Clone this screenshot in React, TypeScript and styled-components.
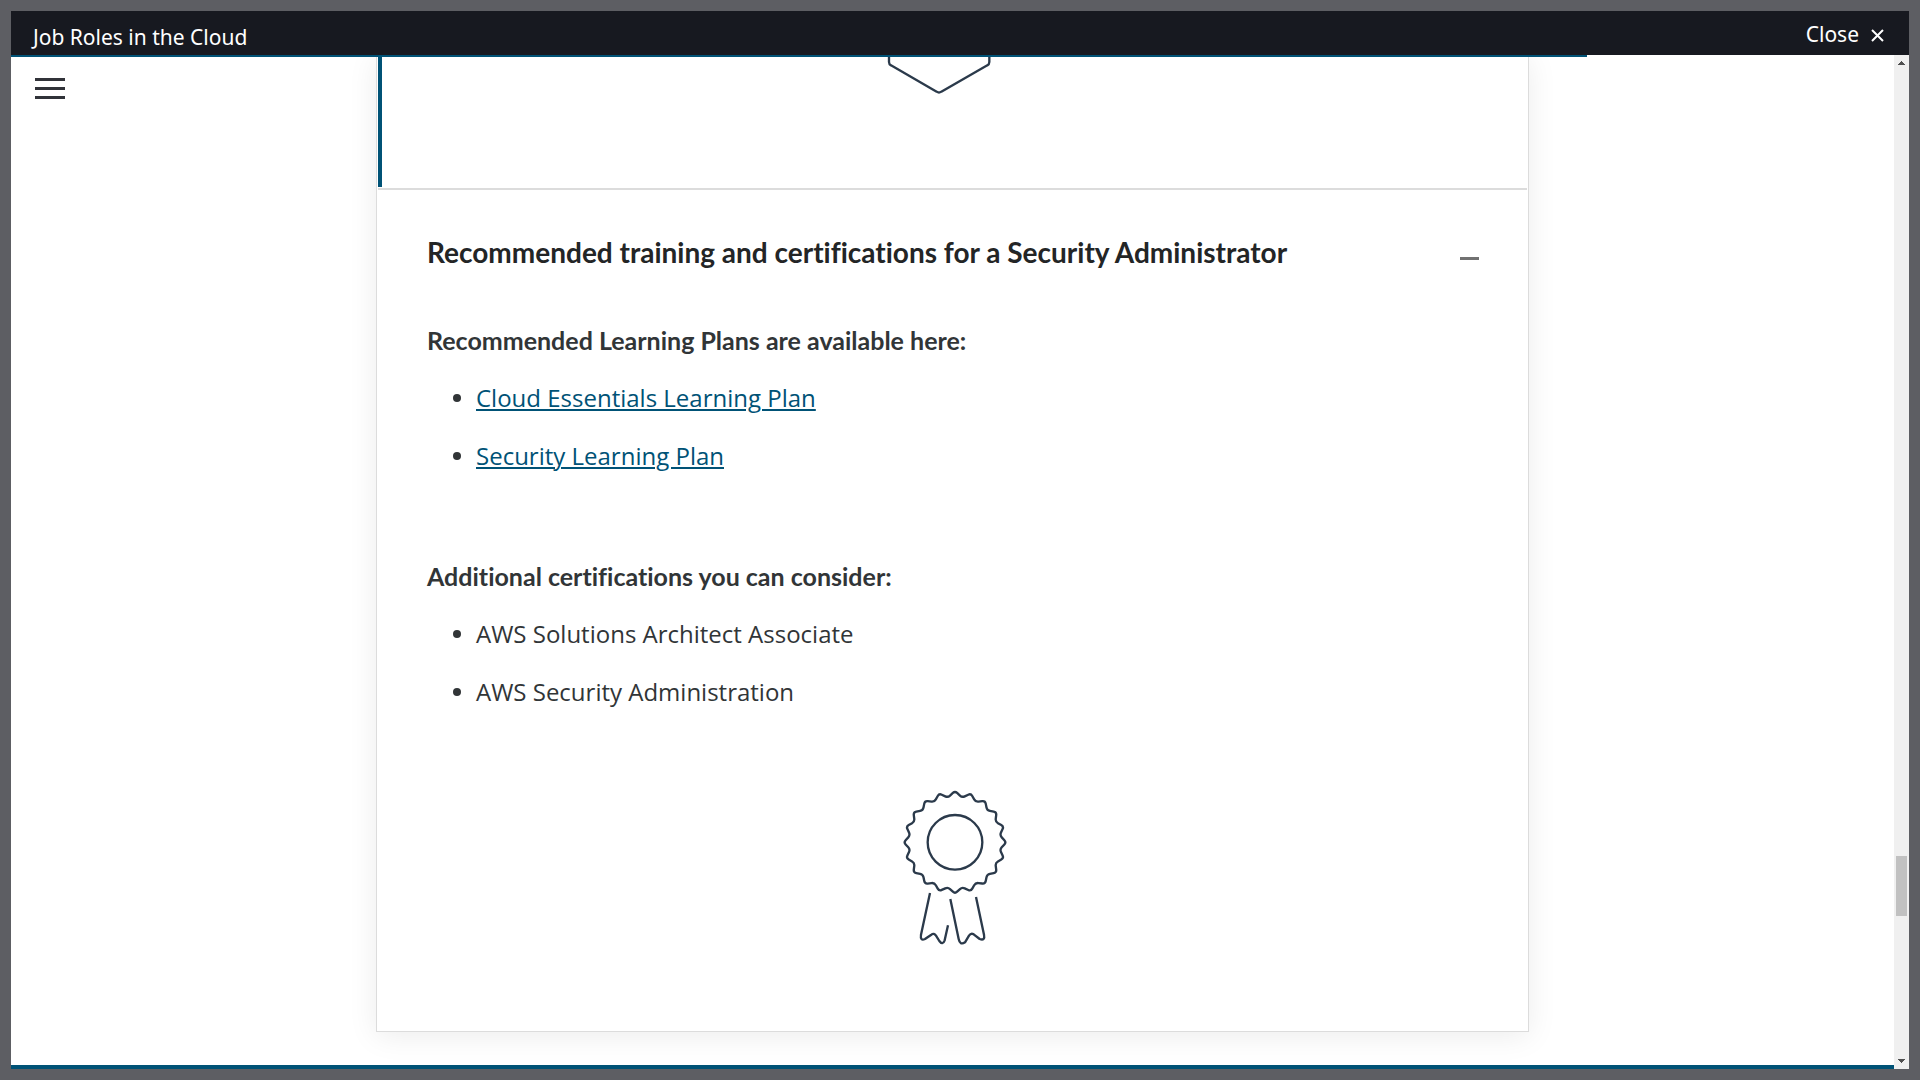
import React from "react";
import styled, { createGlobalStyle } from "styled-components";

const Global = createGlobalStyle`
  *, *::before, *::after { box-sizing: border-box; }
  body { margin: 0; background: #5d5e63; font-family: "Open Sans", "Noto Sans", sans-serif; }
  h2, h3, ul { margin: 0; padding: 0; }
  button { border: 0; padding: 0; background: none; cursor: pointer; font: inherit; }
`;

const Backdrop = styled.div`
  display: flex;
  min-height: 100vh;
  padding: 11px;
  background: #5d5e63;
`;

const Dialog = styled.div`
  display: flex;
  flex: 1;
  flex-direction: column;
  min-width: 0;
  background: #fff;
`;

const TopBar = styled.header`
  display: flex;
  justify-content: space-between;
  align-items: flex-start;
  height: 44px;
  padding: 8px 25px 0 22px;
  background: #171920;
  color: #fff;
  font-family: "Noto Sans", "Open Sans", sans-serif;
  font-size: 21px;
  line-height: 30px;
`;

const Title = styled.div`
  padding-top: 3px;
`;

const CloseButton = styled.button`
  display: flex;
  align-items: center;
  gap: 12px;
  color: #fff;
  line-height: 30px;
`;

const Body = styled.div`
  display: flex;
  flex: 1;
`;

const Lesson = styled.main`
  position: relative;
  display: flex;
  flex: 1;
  flex-direction: column;
  align-items: center;
  min-width: 0;
  overflow: hidden;
`;

const Progress = styled.div<{ $value: number }>`
  position: absolute;
  z-index: 1;
  top: 0;
  left: 0;
  width: ${(p) => p.$value}%;
  height: 2px;
  background: #005276;
`;

const MenuButton = styled.button`
  position: absolute;
  top: 23px;
  left: 24px;
  display: flex;
  flex-direction: column;
  gap: 6px;
  width: 30px;
`;

const MenuBar = styled.span`
  height: 3px;
  background: #313339;
`;

const Accordion = styled.div`
  width: 100%;
  max-width: 1153px;
  margin-bottom: 33px;
  padding: 0 1px;
  border: 1px solid #dcdcdc;
  border-top: 0;
  background: #fff;
  box-shadow: 0 4px 28px rgba(0, 0, 0, 0.08);
`;

const PreviousPanel = styled.section`
  display: flex;
  justify-content: center;
  height: 132px;
  padding-right: 30px;
  border-left: 4px solid #005276;
`;

const Panel = styled.section`
  margin-top: 1px;
  padding: 42px 48px 83px 49px;
  border-top: 2px solid #dcdcdc;
`;

const PanelHead = styled.div`
  display: flex;
  justify-content: space-between;
  margin-bottom: 36px;
`;

const PanelTitle = styled.h2`
  color: #232526;
  font-family: Lato, "Open Sans", sans-serif;
  font-size: 28px;
  font-weight: 700;
  font-variant-ligatures: none;
  line-height: 40px;
`;

const Toggle = styled.button`
  display: flex;
  align-items: center;
  height: 52px;
`;

const Minus = styled.span`
  width: 19px;
  height: 3px;
  background: #717171;
`;

const Group = styled.div`
  margin-bottom: 80px;

  &:last-of-type {
    margin-bottom: 76px;
  }
`;

const GroupTitle = styled.h3`
  color: #313537;
  font-family: Lato, "Open Sans", sans-serif;
  font-size: 25px;
  font-weight: 700;
  font-variant-ligatures: none;
  line-height: 40px;
`;

const List = styled.ul`
  list-style: none;
`;

const Item = styled.li`
  display: flex;
  align-items: center;
  gap: 15px;
  margin-top: 18px;
  padding-left: 26px;
  color: #313537;
  font-size: 24px;
  line-height: 40px;

  &::before {
    content: "";
    width: 8px;
    height: 8px;
    border-radius: 50%;
    background: #313537;
  }
`;

const PlanLink = styled.a`
  color: #005276;
  text-decoration: underline;
  text-decoration-thickness: 2px;
  text-underline-offset: 2px;
`;

const Figure = styled.figure`
  display: flex;
  justify-content: center;
  margin: 0;
`;

const NextBlock = styled.div`
  flex: 1;
  width: 100%;
  min-height: 4px;
  background: #005276;
`;

const ScrollTrack = styled.div`
  display: flex;
  flex-direction: column;
  align-items: center;
  width: 15px;
  padding: 6px 0;
  background: #f0f0f0;
`;

const Thumb = styled.div`
  width: 11px;
  height: 60px;
  background: #c1c1c1;
`;

const Space = styled.div<{ $grow: number }>`
  flex: ${(p) => p.$grow} 0 0;
`;

const badgeEdge = () => {
  const pts = Array.from({ length: 40 }, (_, i) => {
    const a = (i * Math.PI) / 20;
    const r = i % 2 ? 136 : 154;
    return [225 + r * Math.sin(a), 217 - r * Math.cos(a)];
  });
  const mix = (a: number[], b: number[], t: number) =>
    `${(a[0] + (b[0] - a[0]) * t).toFixed(1)} ${(a[1] + (b[1] - a[1]) * t).toFixed(1)}`;
  return (
    pts
      .map((p, i) => {
        const prev = pts[(i + 39) % 40];
        const next = pts[(i + 1) % 40];
        return `${i ? "L" : "M"}${mix(p, prev, 0.3)}Q${p[0].toFixed(1)} ${p[1].toFixed(1)} ${mix(p, next, 0.3)}`;
      })
      .join("") + "Z"
  );
};

const Badge = () => (
  <svg width="108" height="160" viewBox="57 54 324 480" fill="none" stroke="#2b3a4b" strokeWidth="7" strokeLinejoin="round" aria-hidden="true">
    <path d={badgeEdge()} />
    <circle cx="225" cy="217" r="82" />
    <path d="M150 369 123 494Q120 514 135 507L154 494Q162 488 168 497L178 513Q188 527 194 511L204 466" />
    <path d="M211 387 236 507Q240 527 255 517L267 497Q273 488 281 493L299 507Q316 513 312 494L288 381" />
  </svg>
);

const Hexagon = () => (
  <svg width="108" height="40" viewBox="78 15 324 120" fill="none" stroke="#2b3a4b" strokeWidth="7" aria-hidden="true">
    <path d="M87 10V36Q87 43 93 46L230 125Q237 130 244 125L382 46Q388 43 388 36V10" />
  </svg>
);

const plans = ["Cloud Essentials Learning Plan", "Security Learning Plan"];
const certifications = ["AWS Solutions Architect Associate", "AWS Security Administration"];

export default function App() {
  return (
    <>
      <Global />
      <Backdrop>
        <Dialog role="dialog" aria-label="Job Roles in the Cloud">
          <TopBar>
            <Title>Job Roles in the Cloud</Title>
            <CloseButton type="button">
              Close
              <svg width="13" height="30" viewBox="0 0 13 30" stroke="#fff" strokeWidth="2" aria-hidden="true">
                <path d="M1 11 12 22M12 11 1 22" />
              </svg>
            </CloseButton>
          </TopBar>
          <Body>
            <Lesson>
              <Progress $value={83.7} />
              <MenuButton type="button" aria-label="Menu">
                <MenuBar />
                <MenuBar />
                <MenuBar />
              </MenuButton>
              <Accordion>
                <PreviousPanel>
                  <Hexagon />
                </PreviousPanel>
                <Panel>
                  <PanelHead>
                    <PanelTitle>Recommended training and certifications for a Security Administrator</PanelTitle>
                    <Toggle type="button" aria-label="Collapse" aria-expanded="true">
                      <Minus />
                    </Toggle>
                  </PanelHead>
                  <Group>
                    <GroupTitle>Recommended Learning Plans are available here:</GroupTitle>
                    <List>
                      {plans.map((plan) => (
                        <Item key={plan}>
                          <PlanLink href="#">{plan}</PlanLink>
                        </Item>
                      ))}
                    </List>
                  </Group>
                  <Group>
                    <GroupTitle>Additional certifications you can consider:</GroupTitle>
                    <List>
                      {certifications.map((name) => (
                        <Item key={name}>{name}</Item>
                      ))}
                    </List>
                  </Group>
                  <Figure>
                    <Badge />
                  </Figure>
                </Panel>
              </Accordion>
              <NextBlock />
            </Lesson>
            <ScrollTrack aria-hidden="true">
              <svg width="7" height="4" viewBox="0 0 7 4" fill="#505050">
                <path d="M3 0h1v1h1v1h1v1h1v1H0V3h1V2h1V1h1z" />
              </svg>
              <Space $grow={791} />
              <Thumb />
              <Space $grow={143} />
              <svg width="7" height="4" viewBox="0 0 7 4" fill="#505050">
                <path d="M0 0h7v1H6v1H5v1H4v1H3V3H2V2H1V1H0z" />
              </svg>
            </ScrollTrack>
          </Body>
        </Dialog>
      </Backdrop>
    </>
  );
}
